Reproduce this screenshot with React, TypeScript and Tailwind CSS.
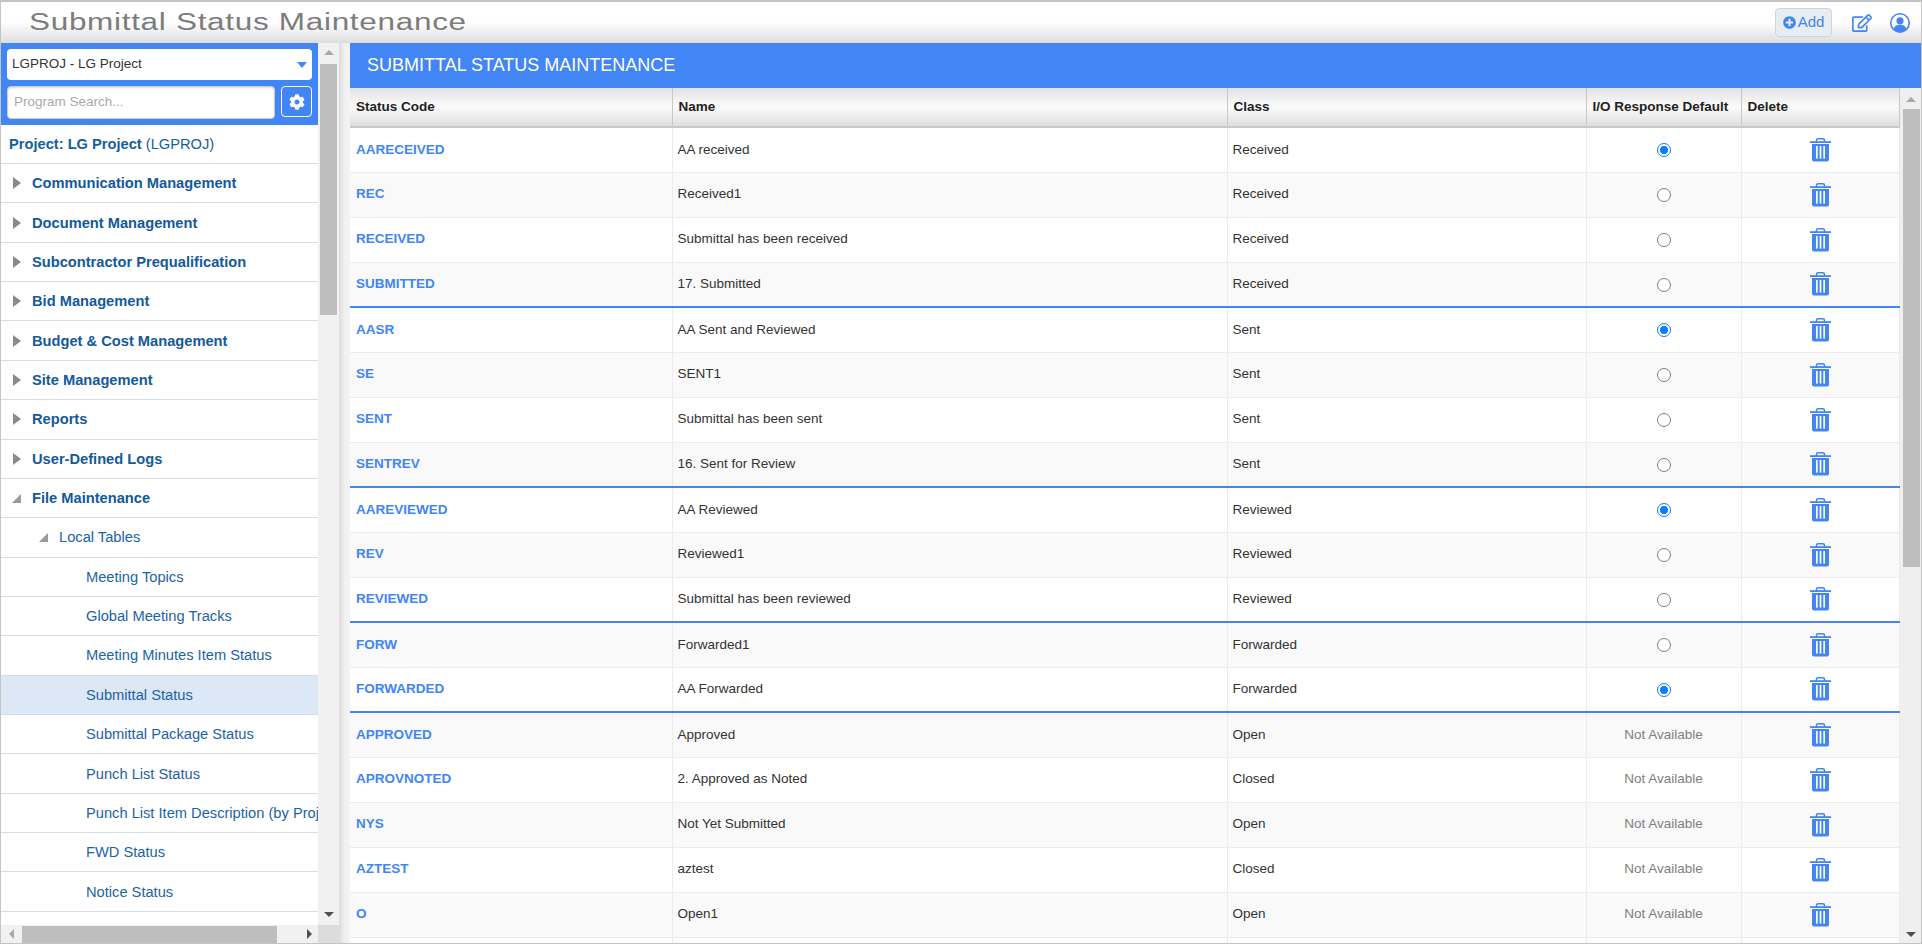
import type { ReactElement } from 'react';
import { FaCog, FaPlusCircle, FaRegEdit } from 'react-icons/fa';

interface StatusRow {
  code: string;
  name: string;
  cls: string;
  io: 'on' | 'off' | 'na';
  groupEnd?: boolean;
}

const rows: StatusRow[] = [
  { code: 'AARECEIVED', name: 'AA received', cls: 'Received', io: 'on' },
  { code: 'REC', name: 'Received1', cls: 'Received', io: 'off' },
  { code: 'RECEIVED', name: 'Submittal has been received', cls: 'Received', io: 'off' },
  { code: 'SUBMITTED', name: '17. Submitted', cls: 'Received', io: 'off', groupEnd: true },
  { code: 'AASR', name: 'AA Sent and Reviewed', cls: 'Sent', io: 'on' },
  { code: 'SE', name: 'SENT1', cls: 'Sent', io: 'off' },
  { code: 'SENT', name: 'Submittal has been sent', cls: 'Sent', io: 'off' },
  { code: 'SENTREV', name: '16. Sent for Review', cls: 'Sent', io: 'off', groupEnd: true },
  { code: 'AAREVIEWED', name: 'AA Reviewed', cls: 'Reviewed', io: 'on' },
  { code: 'REV', name: 'Reviewed1', cls: 'Reviewed', io: 'off' },
  { code: 'REVIEWED', name: 'Submittal has been reviewed', cls: 'Reviewed', io: 'off', groupEnd: true },
  { code: 'FORW', name: 'Forwarded1', cls: 'Forwarded', io: 'off' },
  { code: 'FORWARDED', name: 'AA Forwarded', cls: 'Forwarded', io: 'on', groupEnd: true },
  { code: 'APPROVED', name: 'Approved', cls: 'Open', io: 'na' },
  { code: 'APROVNOTED', name: '2. Approved as Noted', cls: 'Closed', io: 'na' },
  { code: 'NYS', name: 'Not Yet Submitted', cls: 'Open', io: 'na' },
  { code: 'AZTEST', name: 'aztest', cls: 'Closed', io: 'na' },
  { code: 'O', name: 'Open1', cls: 'Open', io: 'na' },
];

const topMenu = [
  'Communication Management',
  'Document Management',
  'Subcontractor Prequalification',
  'Bid Management',
  'Budget & Cost Management',
  'Site Management',
  'Reports',
  'User-Defined Logs',
];

const leafMenu = [
  'Meeting Topics',
  'Global Meeting Tracks',
  'Meeting Minutes Item Status',
  'Submittal Status',
  'Submittal Package Status',
  'Punch List Status',
  'Punch List Item Description (by Proj',
  'FWD Status',
  'Notice Status',
];

function TrashIcon(): ReactElement {
  return (
    <svg width="21" height="24" viewBox="0 0 21 24" className="inline-block">
      <path d="M6.5 4V2.4C6.5 1.3 7.3.8 8.2.8h4.6c.9 0 1.7.5 1.7 1.6V4" fill="none" stroke="#4285f4" strokeWidth="1.6" />
      <rect x="0" y="3.2" width="21" height="1.8" fill="#4285f4" />
      <path d="M2 6h17v15.4a2 2 0 0 1-2 2H4a2 2 0 0 1-2-2z" fill="#4285f4" />
      <rect x="6" y="8" width="1.7" height="12.6" fill="#fff" />
      <rect x="9.65" y="8" width="1.7" height="12.6" fill="#fff" />
      <rect x="13.3" y="8" width="1.7" height="12.6" fill="#fff" />
    </svg>
  );
}

function UserIcon(): ReactElement {
  return (
    <svg width="20" height="20" viewBox="0 0 20 20" className="ml-[18px]">
      <circle cx="10" cy="10" r="9.2" fill="#fff" stroke="#4285f4" strokeWidth="1.6" />
      <circle cx="10" cy="7.8" r="3.6" fill="#4285f4" />
      <path d="M3.6 16c.8-3 3.2-4.2 6.4-4.2s5.600 1.200 6.400 4.200A9 9 0 0 1 10 19a9 9 0 0 1-6.400-3z" fill="#4285f4" />
    </svg>
  );
}

function Radio({ on }: { on: boolean }): ReactElement {
  if (on) {
    return (
      <span className="inline-flex h-[14px] w-[14px] items-center justify-center rounded-full border border-[#0a7cff] bg-white">
        <span className="h-[8px] w-[8px] rounded-full bg-[#0a7cff]" />
      </span>
    );
  }
  return <span className="inline-block h-[14px] w-[14px] rounded-full border border-[#808080] bg-white" />;
}

function ArrowRight(): ReactElement {
  return (
    <svg width="8" height="12" viewBox="0 0 8 12">
      <path d="M0 0l8 6-8 6z" fill="#8a8a8a" />
    </svg>
  );
}

function ArrowOpen(): ReactElement {
  return (
    <svg width="9" height="9" viewBox="0 0 9 9">
      <path d="M9 0v9H0z" fill="#9a9a9a" />
    </svg>
  );
}

function Sidebar(): ReactElement {
  return (
    <div className="flex w-[338px] shrink-0 flex-col">
      <div className="flex min-h-0 flex-1">
        <div className="w-[317px] shrink-0 overflow-hidden bg-white">
          <div className="flex h-[82px] flex-col gap-[6px] bg-[#4285f4] px-[6px] pt-[6px]">
            <div className="relative flex h-[31px] w-[305px] items-center rounded-[4px] bg-white pl-[5px] text-[13.5px] text-[#333]">
              LGPROJ - LG Project
              <span className="absolute right-[5px] top-[13px] h-0 w-0 border-x-[5px] border-t-[6px] border-x-transparent border-t-[#4285f4]" />
            </div>
            <div className="flex gap-[6px]">
              <div className="flex h-[33px] w-[268px] items-center rounded-[4px] border border-[#ccc] bg-white pl-[6px] text-[13.5px] text-[#aaa] shadow-[inset_0_1px_2px_rgba(0,0,0,0.15)]">
                Program Search...
              </div>
              <div className="flex h-[31px] w-[31px] items-center justify-center rounded-[4px] border border-white bg-[#4285f4] text-white">
                <FaCog size={16} />
              </div>
            </div>
          </div>
          <div className="flex h-[39px] items-center border-b border-[#d5dde5] pl-[8px] text-[14.67px] text-[#14609e]">
            <span className="font-bold">Project: LG Project</span>
            <span className="ml-[4px]">(LGPROJ)</span>
          </div>
          {topMenu.map((label) => (
            <div
              key={label}
              className="flex h-[39.37px] items-center border-b border-[#d5dde5] pl-[12px] text-[14.67px] font-bold text-[#13599c]"
            >
              <span className="mr-[11px] flex w-[8px]">
                <ArrowRight />
              </span>
              {label}
            </div>
          ))}
          <div className="flex h-[39.37px] items-center border-b border-[#d5dde5] pl-[11px] text-[14.67px] font-bold text-[#13599c]">
            <span className="mr-[11px] flex w-[9px]">
              <ArrowOpen />
            </span>
            File Maintenance
          </div>
          <div className="flex h-[39.37px] items-center border-b border-[#d5dde5] pl-[38px] text-[14.67px] text-[#1b63a8]">
            <span className="mr-[11px] flex w-[9px]">
              <ArrowOpen />
            </span>
            Local Tables
          </div>
          {leafMenu.map((label) => (
            <div
              key={label}
              className={`flex h-[39.37px] items-center whitespace-nowrap border-b border-[#d5dde5] pl-[85px] text-[14.67px] text-[#1b63a8] ${
                label === 'Submittal Status' ? 'bg-[#dce8f5]' : ''
              }`}
            >
              {label}
            </div>
          ))}
        </div>
        <div className="relative w-[21px] shrink-0 bg-[#f1f1f1]">
          <span className="absolute left-[6px] top-[7px] h-0 w-0 border-x-[5px] border-b-[5px] border-x-transparent border-b-[#a8a8a8]" />
          <div className="absolute left-[2px] top-[21px] h-[251px] w-[17px] bg-[#bebebe]" />
          <span className="absolute bottom-[8px] left-[6px] h-0 w-0 border-x-[5px] border-t-[5px] border-x-transparent border-t-[#505050]" />
        </div>
      </div>
      <div className="flex h-[18px] shrink-0">
        <div className="relative w-[317px] bg-[#f1f1f1]">
          <span className="absolute left-[8px] top-[4px] h-0 w-0 border-y-[5px] border-r-[5px] border-y-transparent border-r-[#a8a8a8]" />
          <div className="absolute left-[21px] top-[1px] h-[17px] w-[255px] bg-[#bebebe]" />
          <span className="absolute right-[6px] top-[4px] h-0 w-0 border-y-[5px] border-l-[5px] border-y-transparent border-l-[#505050]" />
        </div>
        <div className="w-[21px] bg-[#dcdcdc]" />
      </div>
    </div>
  );
}

function StatusTable(): ReactElement {
  const headCell =
    'whitespace-nowrap border-b-2 border-r border-[#c8c8c8] bg-gradient-to-b from-[#e2e2e2] via-[#fbfbfb] to-[#dedede] px-[6px] text-left text-[13.5px] font-bold text-[#222]';
  return (
    <table className="w-[1549px] table-fixed border-collapse text-[13.5px] text-[#333]">
      <colgroup>
        <col className="w-[322px]" />
        <col className="w-[555px]" />
        <col className="w-[359px]" />
        <col className="w-[155px]" />
        <col className="w-[158px]" />
      </colgroup>
      <thead>
        <tr className="h-[39px]">
          <th className={headCell}>Status Code</th>
          <th className={headCell}>Name</th>
          <th className={headCell}>Class</th>
          <th className={headCell}>I/O Response Default</th>
          <th className={headCell}>Delete</th>
        </tr>
      </thead>
      <tbody>
        {rows.map((r) => {
          const line = r.groupEnd ? 'border-b-2 border-b-[#4285f4]' : 'border-b border-b-[#ececec]';
          const cell = `border-r border-r-[#ececec] ${line} px-[5px]`;
          return (
            <tr key={r.code} className="h-[45px] odd:bg-white even:bg-[#f9f9f9]">
              <td className={`${cell} pl-[6px] font-bold text-[#4285f4]`}>{r.code}</td>
              <td className={cell}>{r.name}</td>
              <td className={cell}>{r.cls}</td>
              <td className={`${cell} text-center`}>
                {r.io === 'na' ? (
                  <span className="text-[#808080]">Not Available</span>
                ) : (
                  <span className="flex items-center justify-center pt-[1px]">
                    <Radio on={r.io === 'on'} />
                  </span>
                )}
              </td>
              <td className={`${cell} text-center`}>
                <TrashIcon />
              </td>
            </tr>
          );
        })}
        <tr className="h-[45px] bg-white">
          <td className="border-r border-r-[#ececec]" />
          <td className="border-r border-r-[#ececec]" />
          <td className="border-r border-r-[#ececec]" />
          <td className="border-r border-r-[#ececec]" />
          <td className="border-r border-r-[#ececec]" />
        </tr>
      </tbody>
    </table>
  );
}

export default function App(): ReactElement {
  return (
    <div className="flex h-[944px] w-[1922px] flex-col overflow-hidden border-x border-b border-t-2 border-[#c4c4c4] bg-white font-['Liberation_Sans',Arial,sans-serif]">
      <header className="flex h-[41px] shrink-0 items-center justify-between bg-gradient-to-b from-white via-white to-[#dddddd] pl-[28px] pr-[11px]">
        <h1 className="origin-left scale-x-[1.37] whitespace-nowrap text-[23px] font-normal tracking-[0.5px] text-[#7c7c7c]">
          Submittal Status Maintenance
        </h1>
        <div className="flex items-center text-[#4285f4]">
          <div className="flex h-[29px] w-[57px] items-center justify-center gap-[2px] rounded-[4px] border border-[#cdd5dd] bg-[#e8edf2] text-[15px]">
            <FaPlusCircle size={13} />
            Add
          </div>
          <FaRegEdit size={20} className="ml-[20px]" />
          <UserIcon />
        </div>
      </header>
      <div className="flex min-h-0 flex-1">
        <Sidebar />
        <div className="w-[11px] shrink-0 bg-gradient-to-r from-[#dcdcdc] via-[#f0f0f0] to-[#f4f4f4]" />
        <main className="flex min-w-0 flex-1 flex-col">
          <div className="flex h-[45px] shrink-0 items-center bg-[#4285f4] pl-[17px] text-[18px] text-white">
            SUBMITTAL STATUS MAINTENANCE
          </div>
          <div className="flex min-h-0 flex-1">
            <div className="min-w-0 flex-1 overflow-hidden">
              <StatusTable />
            </div>
            <div className="relative w-[21px] shrink-0 bg-[#efefef]">
              <span className="absolute left-[6px] top-[9px] h-0 w-0 border-x-[5px] border-b-[5px] border-x-transparent border-b-[#a8a8a8]" />
              <div className="absolute left-[3px] top-[21px] h-[458px] w-[17px] bg-[#bebebe]" />
              <span className="absolute bottom-[6px] left-[6px] h-0 w-0 border-x-[5px] border-t-[5px] border-x-transparent border-t-[#505050]" />
            </div>
          </div>
        </main>
      </div>
    </div>
  );
}
